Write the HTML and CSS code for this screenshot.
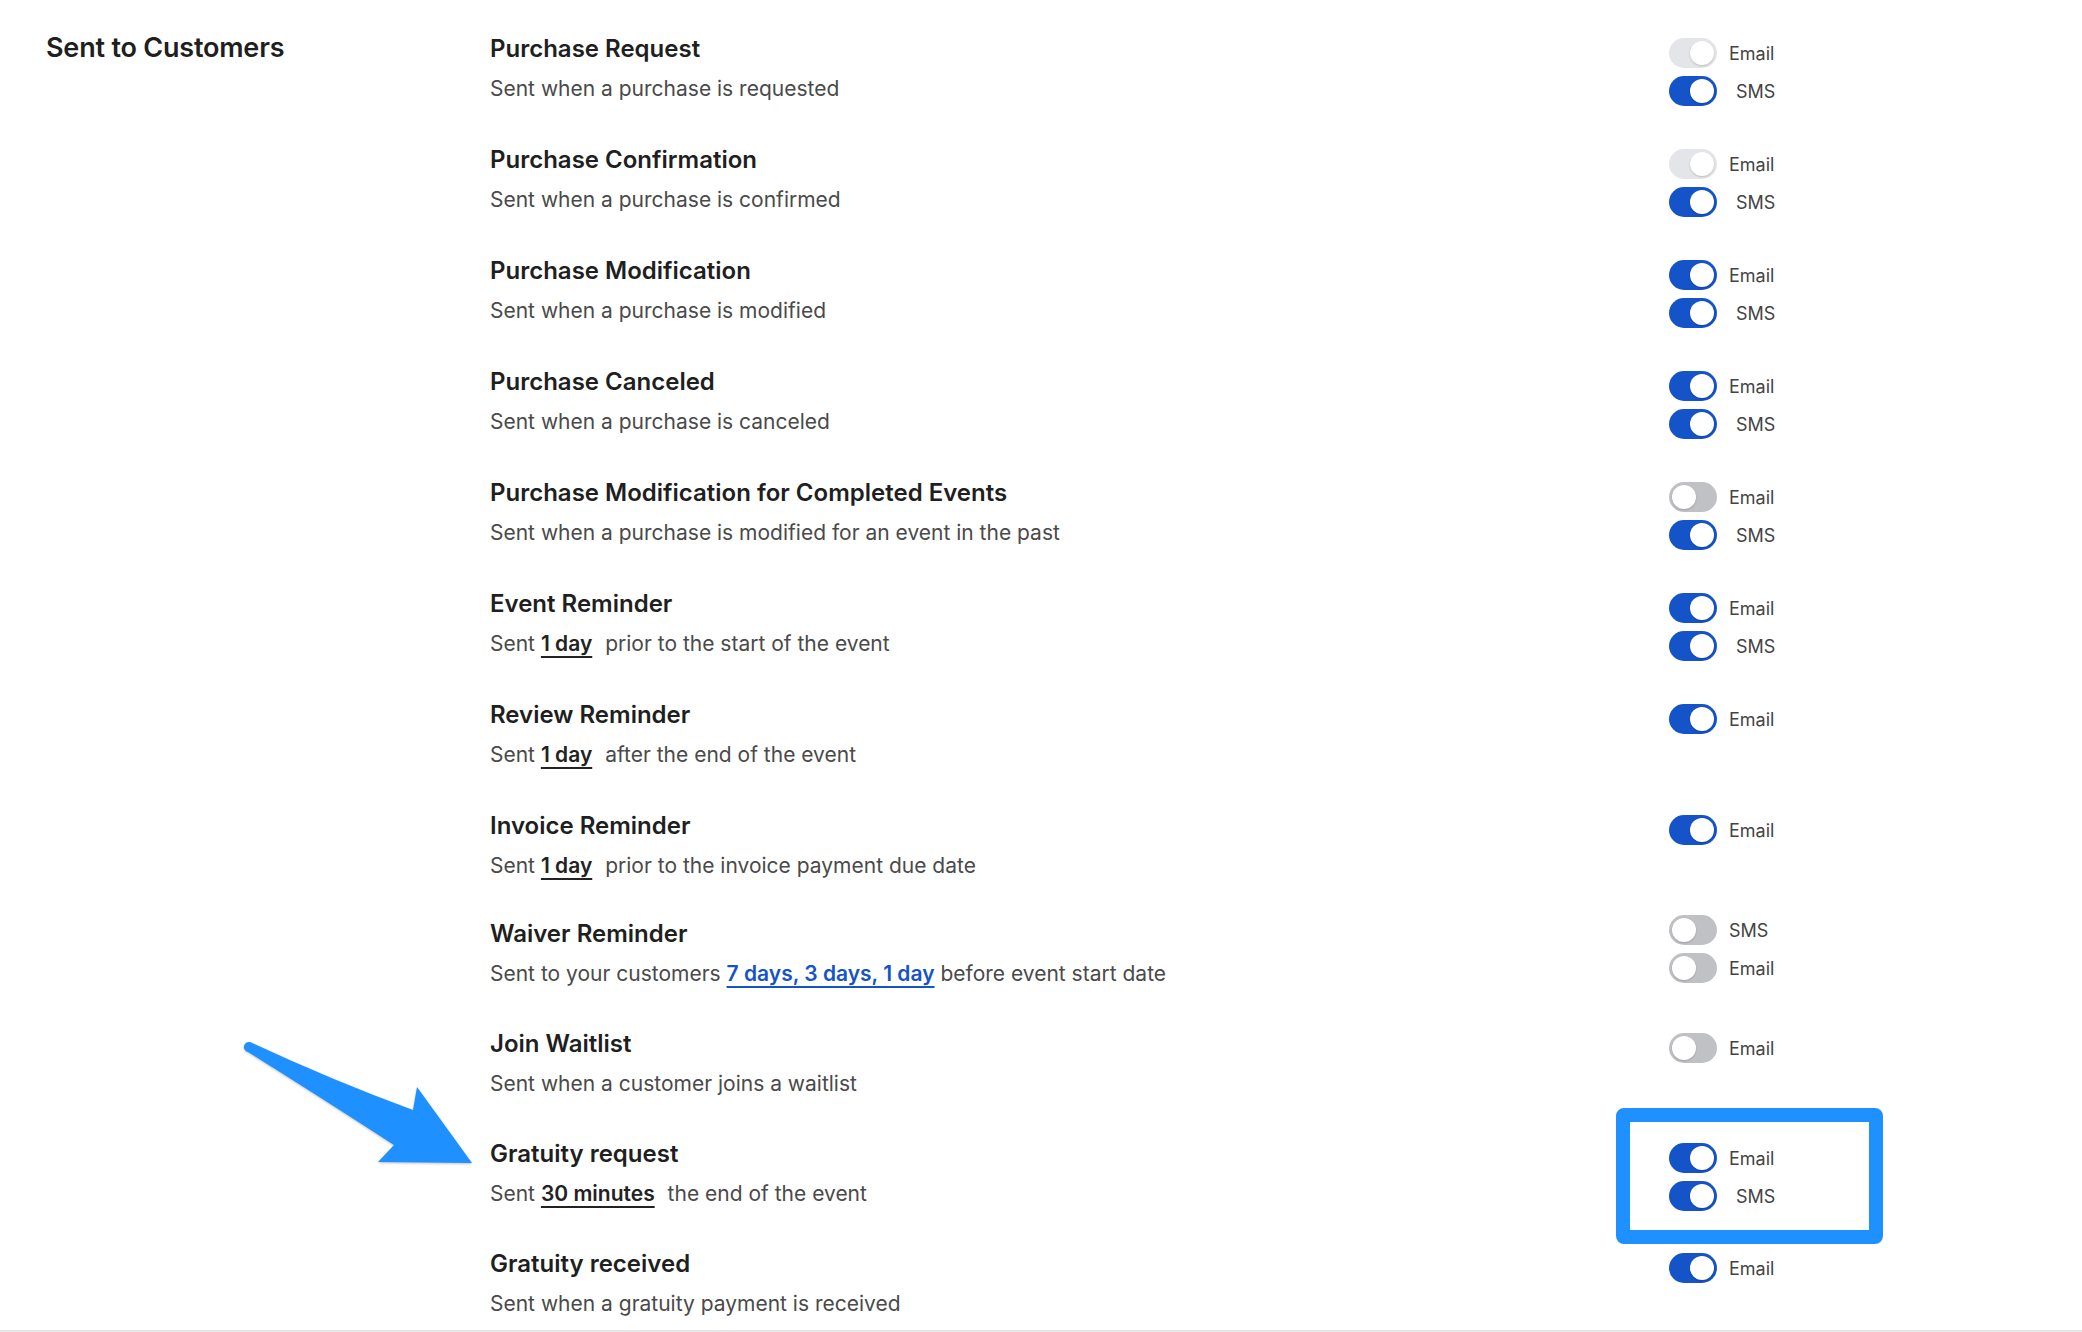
FILE: index.html
```html
<!DOCTYPE html>
<html lang="en">
<head>
<meta charset="utf-8">
<title>Sent to Customers</title>
<link rel="stylesheet" href="styles.css">
</head>
<body>
<div class="page">
  <section class="section">
    <h2 class="section-title">Sent to Customers</h2>
    <div class="list">
      <div class="row">
        <div class="text"><div class="title">Purchase Request</div><div class="desc">Sent when a purchase is requested</div></div>
        <div class="toggles">
          <div class="opt"><span class="switch dim"></span><span class="lbl">Email</span></div>
          <div class="opt"><span class="switch on"></span><span class="lbl indent">SMS</span></div>
        </div>
      </div>
      <div class="row">
        <div class="text"><div class="title">Purchase Confirmation</div><div class="desc">Sent when a purchase is confirmed</div></div>
        <div class="toggles">
          <div class="opt"><span class="switch dim"></span><span class="lbl">Email</span></div>
          <div class="opt"><span class="switch on"></span><span class="lbl indent">SMS</span></div>
        </div>
      </div>
      <div class="row">
        <div class="text"><div class="title">Purchase Modification</div><div class="desc">Sent when a purchase is modified</div></div>
        <div class="toggles">
          <div class="opt"><span class="switch on"></span><span class="lbl">Email</span></div>
          <div class="opt"><span class="switch on"></span><span class="lbl indent">SMS</span></div>
        </div>
      </div>
      <div class="row">
        <div class="text"><div class="title">Purchase Canceled</div><div class="desc">Sent when a purchase is canceled</div></div>
        <div class="toggles">
          <div class="opt"><span class="switch on"></span><span class="lbl">Email</span></div>
          <div class="opt"><span class="switch on"></span><span class="lbl indent">SMS</span></div>
        </div>
      </div>
      <div class="row">
        <div class="text"><div class="title">Purchase Modification for Completed Events</div><div class="desc">Sent when a purchase is modified for an event in the past</div></div>
        <div class="toggles">
          <div class="opt"><span class="switch off"></span><span class="lbl">Email</span></div>
          <div class="opt"><span class="switch on"></span><span class="lbl indent">SMS</span></div>
        </div>
      </div>
      <div class="row">
        <div class="text"><div class="title">Event Reminder</div><div class="desc">Sent <span class="val">1 day</span> prior to the start of the event</div></div>
        <div class="toggles">
          <div class="opt"><span class="switch on"></span><span class="lbl">Email</span></div>
          <div class="opt"><span class="switch on"></span><span class="lbl indent">SMS</span></div>
        </div>
      </div>
      <div class="row">
        <div class="text"><div class="title">Review Reminder</div><div class="desc">Sent <span class="val">1 day</span> after the end of the event</div></div>
        <div class="toggles">
          <div class="opt"><span class="switch on"></span><span class="lbl">Email</span></div>
        </div>
      </div>
      <div class="row row-short">
        <div class="text"><div class="title">Invoice Reminder</div><div class="desc">Sent <span class="val">1 day</span> prior to the invoice payment due date</div></div>
        <div class="toggles">
          <div class="opt"><span class="switch on"></span><span class="lbl">Email</span></div>
        </div>
      </div>
      <div class="row row-compact">
        <div class="text"><div class="title">Waiver Reminder</div><div class="desc">Sent to your customers <a class="link" href="#">7 days, 3 days, 1 day</a> before event start date</div></div>
        <div class="toggles toggles-raised">
          <div class="opt"><span class="switch off"></span><span class="lbl">SMS</span></div>
          <div class="opt"><span class="switch off"></span><span class="lbl">Email</span></div>
        </div>
      </div>
      <div class="row row-compact">
        <div class="text"><div class="title">Join Waitlist</div><div class="desc">Sent when a customer joins a waitlist</div></div>
        <div class="toggles">
          <div class="opt"><span class="switch off"></span><span class="lbl">Email</span></div>
        </div>
      </div>
      <div class="row row-compact">
        <div class="text"><div class="title">Gratuity request</div><div class="desc">Sent <span class="val">30 minutes</span> the end of the event</div></div>
        <div class="toggles">
          <div class="opt"><span class="switch on"></span><span class="lbl">Email</span></div>
          <div class="opt"><span class="switch on"></span><span class="lbl indent">SMS</span></div>
        </div>
      </div>
      <div class="row">
        <div class="text"><div class="title">Gratuity received</div><div class="desc">Sent when a gratuity payment is received</div></div>
        <div class="toggles">
          <div class="opt"><span class="switch on"></span><span class="lbl">Email</span></div>
        </div>
      </div>
    </div>
  </section>

  <div class="highlight"></div>
  <svg class="arrow" width="260" height="145" viewBox="230 1030 260 145" xmlns="http://www.w3.org/2000/svg">
    <path d="M 250 1042 Q 334 1081 413 1110 L 417 1087 L 472 1163 L 378 1162 L 394 1145 Q 320 1097 248 1052 A 5 5 0 0 1 250 1042 Z" fill="#1e90ff"/>
  </svg>
</div>
</body>
</html>
```

FILE: styles.css
```css
* { box-sizing: border-box; }

html, body {
  margin: 0;
  padding: 0;
  background: #ffffff;
}

body {
  font-family: Inter, "Noto Sans", "Liberation Sans", sans-serif;
  color: #222222;
}

.page {
  position: relative;
  width: 2082px;
  height: 1332px;
  overflow: hidden;
}

.section {
  display: grid;
  grid-template-columns: 444px 1fr;
  padding-left: 46px;
  height: 1332px;
  border-bottom: 2px solid #e6e6e6;
}

.section-title {
  margin: 0;
  padding-top: 32px;
  font-size: 27px;
  line-height: 32px;
  font-weight: 600;
  color: #1f1f1f;
  letter-spacing: -0.2px;
}

.list {
  padding-top: 33px;
}

.row {
  display: grid;
  grid-template-columns: 1179px auto;
  height: 111px;
}

.row-short {
  height: 108px;
}

.row-compact {
  height: 110px;
}

.title {
  font-size: 24px;
  line-height: 32px;
  font-weight: 600;
  color: #1f1f1f;
}

.desc {
  margin-top: 8px;
  font-size: 21px;
  line-height: 32px;
  color: #4a4a4a;
}

.val {
  font-weight: 600;
  color: #222222;
  text-decoration: underline;
  text-decoration-thickness: 2px;
  text-underline-offset: 5px;
  margin-right: 7px;
}

.link {
  font-weight: 600;
  color: #1553c8;
  text-decoration: underline;
  text-decoration-thickness: 2px;
  text-underline-offset: 5px;
}

.toggles {
  padding-top: 5px;
  display: flex;
  flex-direction: column;
  gap: 8px;
}

.toggles-raised {
  padding-top: 0;
  margin-top: -3px;
}

.opt {
  display: flex;
  align-items: center;
  height: 30px;
}

.switch {
  position: relative;
  width: 48px;
  height: 30px;
  border-radius: 15px;
  background: #1553c8;
  flex: none;
}

.switch::after {
  content: "";
  position: absolute;
  top: 3px;
  left: 21px;
  width: 24px;
  height: 24px;
  border-radius: 50%;
  background: #ffffff;
  box-shadow: 0 1px 2px rgba(0, 0, 0, 0.18);
}

.switch.off {
  background: #c0c1c5;
}

.switch.off::after {
  left: 3px;
}

.switch.dim {
  background: #e4e5e8;
}

.lbl {
  margin-left: 12px;
  font-size: 18px;
  color: #444444;
}

.lbl.indent {
  margin-left: 19px;
}

.highlight {
  position: absolute;
  left: 1616px;
  top: 1108px;
  width: 267px;
  height: 136px;
  border: 14px solid #1e90ff;
  border-radius: 8px;
}

.arrow {
  position: absolute;
  left: 230px;
  top: 1030px;
  filter: drop-shadow(0 1px 1px rgba(0, 0, 0, 0.25));
}
```
